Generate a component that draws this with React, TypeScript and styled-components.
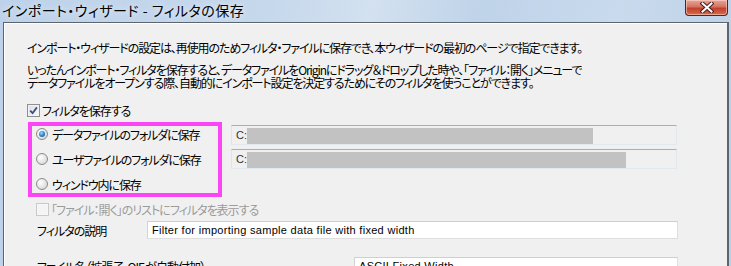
import styled, { createGlobalStyle } from "styled-components";

const GlobalStyle = createGlobalStyle`
  html, body {
    margin: 0;
    padding: 0;
  }
  body {
    background: #c4d6eb;
    font-family: "Noto Sans CJK JP", "Noto Sans", sans-serif;
    color: #000;
  }
`;

const Window = styled.div`
  width: 731px;
  height: 266px;
  overflow: hidden;
  display: flex;
  flex-direction: column;
  background: linear-gradient(100deg, #bdd2ea 0%, #c6d8ec 35%, #d3e1f0 48%, #bfd3e9 62%, #c9daed 80%, #bccfe6 100%);
`;

const TitleBar = styled.div`
  height: 22px;
  flex: none;
  display: flex;
  justify-content: space-between;
  align-items: flex-start;
  padding: 0 3px 0 2px;
`;

const Title = styled.div`
  font-size: 14px;
  line-height: 21px;
  font-feature-settings: "palt";
  letter-spacing: 0.5px;
  text-shadow: 0 0 6px rgba(255, 255, 255, 0.9);
`;

const CloseButton = styled.div`
  width: 43px;
  height: 16px;
  box-sizing: border-box;
  border: 1px solid #5a2120;
  border-top: none;
  border-radius: 0 0 4px 4px;
  background: linear-gradient(#e8a598 0%, #d47462 45%, #c2402c 55%, #d66a4e 100%);
  box-shadow: inset 0 0 0 1px rgba(255, 220, 210, 0.55);
  display: flex;
  align-items: center;
  justify-content: center;
`;

const Client = styled.div`
  flex: 1;
  margin: 0 2px 0 3px;
  border: 1px solid #5c6470;
  border-right-width: 2px;
  border-bottom: none;
  background: #f0f0f0;
  box-shadow: inset 1px 1px 0 #ffffff;
  padding: 18px 0 0 23px;
  font-size: 12px;
`;

const Para = styled.p<{ $gap: number }>`
  margin: ${(p) => p.$gap}px 0 0;
  font-size: 12px;
  line-height: 13px;
  font-feature-settings: "palt";
  letter-spacing: -1.1px;
  white-space: nowrap;
`;

const CheckRow = styled.label<{ $gap: number; $indent: number; $disabled?: boolean }>`
  display: flex;
  align-items: center;
  gap: 2px;
  height: 13px;
  margin: ${(p) => p.$gap}px 0 0 ${(p) => p.$indent}px;
  color: ${(p) => (p.$disabled ? "#9b9b9b" : "#000")};
  font-size: 12px;
  line-height: 13px;
  font-feature-settings: "palt";
  letter-spacing: -1px;
  white-space: nowrap;
`;

const CheckBox = styled.span<{ $disabled?: boolean }>`
  width: 13px;
  height: 13px;
  box-sizing: border-box;
  flex: none;
  border: 1px solid ${(p) => (p.$disabled ? "#c9c9c9" : "#8f8f8f")};
  background: ${(p) =>
    p.$disabled ? "#f4f4f4" : "linear-gradient(135deg, #dcdcdc, #fbfbfb)"};
  box-shadow: inset 0 0 0 1px ${(p) => (p.$disabled ? "#f7f7f7" : "#f3f3f3")};
  display: flex;
  align-items: center;
  justify-content: center;
`;

const GroupRow = styled.div`
  display: flex;
  align-items: flex-start;
  margin-top: 5px;
`;

const Highlight = styled.div`
  width: 194px;
  height: 75px;
  box-sizing: border-box;
  margin-left: 1px;
  border: 4px solid #fb46f6;
  padding-left: 4px;
  display: flex;
  flex-direction: column;
  gap: 9px;
`;

const RadioRow = styled.label`
  display: flex;
  align-items: center;
  gap: 4px;
  height: 16px;
  font-size: 12px;
  font-feature-settings: "palt";
  letter-spacing: -1.1px;
  white-space: nowrap;
`;

const Radio = styled.span<{ $on?: boolean }>`
  width: 12px;
  height: 12px;
  box-sizing: border-box;
  flex: none;
  border-radius: 50%;
  border: 1px solid #8a8a8a;
  background: radial-gradient(circle at 35% 35%, #ffffff 0%, #e9e9e9 45%, #cfcfcf 100%);
  display: flex;
  align-items: center;
  justify-content: center;
  &::after {
    content: "";
    display: ${(p) => (p.$on ? "block" : "none")};
    width: 6px;
    height: 6px;
    border-radius: 50%;
    background: radial-gradient(circle at 40% 35%, #9fdcff 0%, #2f8fd8 45%, #0f3f7a 100%);
  }
`;

const PathColumn = styled.div`
  margin: 3px 0 0 9px;
  width: 446px;
  display: flex;
  flex-direction: column;
  gap: 4px;
`;

const PathField = styled.div`
  height: 20px;
  box-sizing: border-box;
  border: 1px solid;
  border-color: #acaeb4 #e3e8ee #e3e8ee #e2e3ea;
  background: #f0f0f0;
  display: flex;
  align-items: stretch;
  padding-left: 4px;
  font-family: "Liberation Sans", Arial, sans-serif;
  font-size: 11px;
  color: #333;
`;

const DriveText = styled.span`
  align-self: center;
  width: 11px;
  flex: none;
`;

const Redacted = styled.span<{ $w: number }>`
  width: ${(p) => p.$w}px;
  margin-top: 2px;
  background: #c2c2c2;
`;

const FieldRow = styled.div<{ $gap: number }>`
  display: flex;
  align-items: center;
  margin: ${(p) => p.$gap}px 0 0 9px;
`;

const FieldLabel = styled.span<{ $w: number }>`
  width: ${(p) => p.$w}px;
  flex: none;
  padding-left: 1px;
  box-sizing: border-box;
  font-size: 12px;
  font-feature-settings: "palt";
  letter-spacing: -1px;
  white-space: nowrap;
`;

const TextBox = styled.div<{ $w: number }>`
  width: ${(p) => p.$w}px;
  height: 18px;
  box-sizing: border-box;
  border: 1px solid;
  border-color: #cfcfcf #dedede #dedede #d4d4d4;
  background: #ffffff;
  padding-left: 4px;
  font-family: "Liberation Sans", Arial, sans-serif;
  font-size: 11px;
  letter-spacing: 0.3px;
  line-height: 16px;
  white-space: nowrap;
  overflow: hidden;
`;

function Check() {
  return (
    <svg width="9" height="9" viewBox="0 0 9 9">
      <path d="M1.2 4.6 L3.6 7.2 L7.9 1.4" fill="none" stroke="#3a4f8e" strokeWidth="1.8" />
    </svg>
  );
}

function CloseGlyph() {
  return (
    <svg width="14" height="11" viewBox="0 0 14 11">
      <path d="M2.5 1.5 L11.5 9.5 M11.5 1.5 L2.5 9.5" stroke="#4a1d1a" strokeWidth="4" strokeLinecap="square" />
      <path d="M2.5 1.5 L11.5 9.5 M11.5 1.5 L2.5 9.5" stroke="#ffffff" strokeWidth="2" strokeLinecap="square" />
    </svg>
  );
}

export default function App() {
  return (
    <>
      <GlobalStyle />
      <Window>
        <TitleBar>
          <Title>インポート・ウィザード - フィルタの保存</Title>
          <CloseButton>
            <CloseGlyph />
          </CloseButton>
        </TitleBar>
        <Client>
          <Para $gap={0}>
            インポート・ウィザードの設定は、再使用のためフィルタ・ファイルに保存でき、本ウィザードの最初のページで指定できます。
          </Para>
          <Para $gap={9}>
            いったんインポート・フィルタを保存すると、データファイルをOriginにドラッグ＆ドロップした時や、「ファイル：開く」メニューで
            <br />
            データファイルをオープンする際、自動的にインポート設定を決定するためにそのフィルタを使うことができます。
          </Para>
          <CheckRow $gap={15} $indent={0}>
            <CheckBox>
              <Check />
            </CheckBox>
            フィルタを保存する
          </CheckRow>
          <GroupRow>
            <Highlight>
              <RadioRow>
                <Radio $on />
                データファイルのフォルダに保存
              </RadioRow>
              <RadioRow>
                <Radio />
                ユーザファイルのフォルダに保存
              </RadioRow>
              <RadioRow>
                <Radio />
                ウィンドウ内に保存
              </RadioRow>
            </Highlight>
            <PathColumn>
              <PathField>
                <DriveText>C:</DriveText>
                <Redacted $w={346} />
              </PathField>
              <PathField>
                <DriveText>C:</DriveText>
                <Redacted $w={379} />
              </PathField>
            </PathColumn>
          </GroupRow>
          <CheckRow $gap={6} $indent={9} $disabled>
            <CheckBox $disabled />
            「ファイル：開く」のリストにフィルタを表示する
          </CheckRow>
          <FieldRow $gap={5}>
            <FieldLabel $w={111}>フィルタの説明</FieldLabel>
            <TextBox $w={531}>Filter for importing sample data file with fixed width</TextBox>
          </FieldRow>
          <FieldRow $gap={18}>
            <FieldLabel $w={318}>ファイル名（拡張子 .OIF が自動付加）</FieldLabel>
            <TextBox $w={324}>ASCII Fixed Width</TextBox>
          </FieldRow>
        </Client>
      </Window>
    </>
  );
}
